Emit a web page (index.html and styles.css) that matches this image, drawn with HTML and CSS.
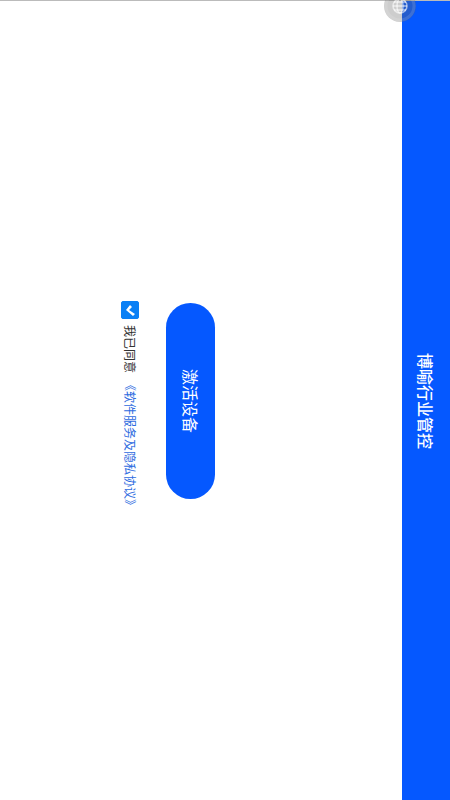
FILE: index.html
```html
<!DOCTYPE html>
<html lang="zh-CN">
<head>
  <meta charset="UTF-8" />
  <meta name="viewport" content="width=device-width, initial-scale=1.0" />
  <title>博喻行业管控</title>
  <link rel="stylesheet" href="styles.css">
</head>
<body>
  <!-- 标题栏 -->
  <header class="title-bar">
    <h1>博喻行业管控</h1>
  </header>

  <!-- 激活设备 -->
  <main class="content">
    <button class="activate" type="button"><span>激活设备</span></button>
    <div class="agreement">
      <input type="checkbox" id="agree" checked>
      <label for="agree">我已同意</label>
      <a href="#">《软件服务及隐私协议》</a>
    </div>
  </main>

  <!-- 悬浮按钮 -->
  <button class="float-ball" type="button" aria-label="悬浮按钮">
    <svg viewBox="0 0 32 32" width="32" height="32">
      <circle cx="16" cy="16" r="16" fill="#666" fill-opacity="0.33" />
      <circle cx="16" cy="16" r="14" fill="none" stroke="#fff" stroke-opacity="0.12" stroke-width="3" />
      <g fill="none" stroke="#fff" stroke-opacity="0.6" stroke-width="1.5">
        <circle cx="16" cy="16" r="7" />
        <ellipse cx="16" cy="16" rx="3" ry="7" />
        <path d="M9 16h14M10 20h12M10 12h12" />
      </g>
    </svg>
  </button>
</body>
</html>
```
FILE: styles.css
```css
/* 页面横向显示：文字整体顺时针旋转 90 度 */
html {
  writing-mode: vertical-rl;
  text-orientation: sideways;
}
body {
  margin: 0;
  height: 100vh;
  min-width: 100vw;
  box-sizing: border-box;
  border-top: 1px solid #bbb;
  background: #fff;
  font-family: "Noto Sans CJK SC", sans-serif;
  overflow: hidden;
}

/* 标题栏 */
.title-bar {
  display: flex;
  justify-content: center;
  align-items: center;
  block-size: 48px;
  padding-top: 2px;
  background: #0558ff;
  color: #fff;
}
.title-bar h1 {
  margin: 0;
  font-size: 16px;
  line-height: 24px;
  font-weight: 500;
}

/* 内容 */
.content {
  display: flex;
  flex-direction: column;
  align-items: center;
  gap: 24px;
  padding-right: 187px;
}
.activate {
  writing-mode: vertical-rl;
  text-orientation: sideways;
  width: 49px;
  height: 196px;
  padding: 2px 0 0;
  border: none;
  border-radius: 25px;
  background: #0558ff;
  color: #fff;
  font-family: inherit;
  font-size: 16px;
  line-height: 24px;
  cursor: pointer;
}

/* 协议 */
.agreement {
  display: flex;
  align-items: center;
  gap: 6px;
  padding-top: 11px;
  font-size: 12px;
  line-height: 24px;
  color: #333;
}
.agreement input {
  appearance: none;
  width: 18px;
  height: 18px;
  margin: 0;
  border: 1px solid #0a80f5;
  border-radius: 2px;
}
.agreement input:checked {
  background: #0a80f5;
}
/* 对勾与文字方向一致 */
.agreement input:checked::before {
  content: "";
  display: block;
  width: 16px;
  height: 16px;
  background: #fff;
  clip-path: polygon(8px 3px, 4px 8px, 11px 14px, 13px 12px, 7px 8px, 10px 5px);
}
.agreement a {
  color: #2e6be0;
  text-decoration: none;
}

/* 悬浮按钮，一部分在屏幕外 */
.float-ball {
  position: fixed;
  top: -10px;
  right: 34px;
  width: 32px;
  height: 32px;
  padding: 0;
  border: none;
  border-radius: 50%;
  background: none;
}
.float-ball svg {
  display: block;
}
```
